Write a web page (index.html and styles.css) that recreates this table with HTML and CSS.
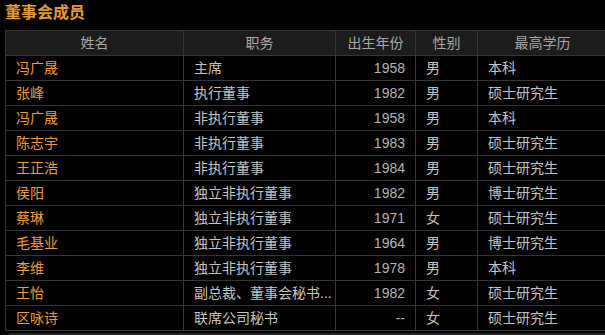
FILE: index.html
```html
<!DOCTYPE html>
<html lang="zh">
<head>
<meta charset="utf-8">
<title>董事会成员</title>
<link rel="stylesheet" href="styles.css">
</head>
<body>
<div class="panel">
  <h2 class="title">董事会成员</h2>
  <table class="board">
    <colgroup>
      <col class="c-name"><col class="c-job"><col class="c-year"><col class="c-sex"><col class="c-edu">
    </colgroup>
    <thead>
      <tr><th>姓名</th><th>职务</th><th>出生年份</th><th>性别</th><th>最高学历</th></tr>
    </thead>
    <tbody>
      <tr><td class="name">冯广晟</td><td>主席</td><td class="num">1958</td><td>男</td><td>本科</td></tr>
      <tr><td class="name">张峰</td><td>执行董事</td><td class="num">1982</td><td>男</td><td>硕士研究生</td></tr>
      <tr><td class="name">冯广晟</td><td>非执行董事</td><td class="num">1958</td><td>男</td><td>本科</td></tr>
      <tr><td class="name">陈志宇</td><td>非执行董事</td><td class="num">1983</td><td>男</td><td>硕士研究生</td></tr>
      <tr><td class="name">王正浩</td><td>非执行董事</td><td class="num">1984</td><td>男</td><td>硕士研究生</td></tr>
      <tr><td class="name">侯阳</td><td>独立非执行董事</td><td class="num">1982</td><td>男</td><td>博士研究生</td></tr>
      <tr><td class="name">蔡琳</td><td>独立非执行董事</td><td class="num">1971</td><td>女</td><td>硕士研究生</td></tr>
      <tr><td class="name">毛基业</td><td>独立非执行董事</td><td class="num">1964</td><td>男</td><td>博士研究生</td></tr>
      <tr><td class="name">李维</td><td>独立非执行董事</td><td class="num">1978</td><td>男</td><td>本科</td></tr>
      <tr><td class="name">王怡</td><td>副总裁、董事会秘书...</td><td class="num">1982</td><td>女</td><td>硕士研究生</td></tr>
      <tr><td class="name">区咏诗</td><td>联席公司秘书</td><td class="num">--</td><td>女</td><td>硕士研究生</td></tr>
    </tbody>
  </table>
  <div class="scrollbar"></div>
</div>
</body>
</html>
```

FILE: styles.css
```css
html, body {
  margin: 0;
  padding: 0;
  background: #000;
  overflow: hidden;
}
body {
  font-family: "Liberation Sans", "Noto Sans CJK SC", sans-serif;
  color: #c4c4c4;
}
.panel {
  padding: 0 0 0 5px;
  width: 602px;
}
.title {
  margin: 0;
  height: 30px;
  padding: 0;
  box-sizing: border-box;
  font-size: 16px;
  line-height: 22px;
  font-weight: bold;
  color: #e39a3a;
  font-family: "Noto Sans CJK SC", sans-serif;
}
.board {
  border-collapse: collapse;
  table-layout: fixed;
  width: 602px;
  font-size: 14px;
}
.c-name { width: 178px; }
.c-job { width: 152px; }
.c-year { width: 80px; }
.c-sex { width: 62px; }
.c-edu { width: 130px; }
.board th, .board td {
  border: 1px solid #353535;
  height: 25px;
  padding: 0 10px;
  box-sizing: border-box;
  white-space: nowrap;
  overflow: hidden;
  line-height: 22px;
  font-weight: normal;
  text-align: left;
}
.board th {
  background: #1c1c1c;
  color: #a8a8a8;
  text-align: center;
}
.board td.name {
  color: #ec9c3c;
}
.board td.num {
  text-align: right;
  color: #b4b4b4;
}
.scrollbar {
  margin: 2px 0 0 3px;
  height: 4px;
  background: #262626;
  border-radius: 2px;
}
```
